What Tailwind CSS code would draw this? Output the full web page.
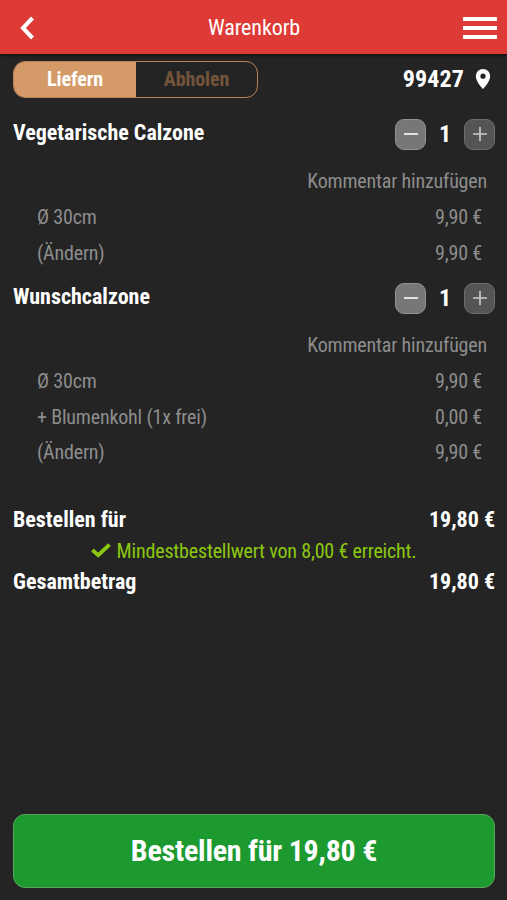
<!DOCTYPE html>
<html lang="de">
<head>
    <meta charset="UTF-8">
    <meta name="viewport" content="width=device-width, initial-scale=1.0">
    <title>Warenkorb</title>
    <script src="https://cdn.jsdelivr.net/npm/@tailwindcss/browser@4"></script>
</head>
<body class="bg-[#242424]">
    <div class="flex flex-col h-[900px] w-[507px] overflow-hidden bg-[#242424] text-white text-[20px] leading-none font-['Roboto_Condensed','Roboto',sans-serif] font-stretch-condensed">
        <!-- Header -->
        <header class="flex items-center h-[54px] shrink-0 bg-[#de3a36] pl-5 pr-[10px] shadow-[0_1px_3px_rgba(0,0,0,0.7)]">
            <svg class="w-[34px] h-6 mt-0.5" viewBox="0 0 34 24" fill="none" stroke="#fff" stroke-width="4"><path d="M12.5 2 L3 12 L12.5 22"/></svg>
            <h1 class="flex-1 text-center pt-0.5 pr-[9px] text-[22px] tracking-[-0.1px]">Warenkorb</h1>
            <svg class="w-[34px] h-6 mt-0.5" viewBox="0 0 34 24" fill="#fff"><path d="M0 1h34v4H0zM0 10h34v4H0zM0 19h34v4H0z"/></svg>
        </header>

        <!-- Delivery / pickup -->
        <div class="flex items-center justify-between h-[50px] shrink-0 pl-[13px] pr-4 pt-px">
            <div class="flex w-[245px] h-[37px] rounded-[12px] border border-[#b88456] overflow-hidden font-bold tracking-[-0.1px]">
                <div class="flex items-center justify-center w-[122px] pb-0.5 bg-[#d49a68]">Liefern</div>
                <div class="flex items-center justify-center flex-1 pb-0.5 text-[#73543b]">Abholen</div>
            </div>
            <div class="flex items-center gap-[11px] -mt-0.5 text-[24px] font-bold">
                <span class="tracking-[0.1px]">99427</span>
                <svg class="w-4 h-5" viewBox="0 0 16 20" fill="#fff" fill-rule="evenodd"><path d="M8 0a7.2 7.2 0 0 0-7.2 7.2C.8 12.500 8 20 8 20s7.200-7.500 7.200-12.800A7.200 7.200 0 0 0 8 0zm0 4.600a2.600 2.600 0 1 1 0 5.200 2.600 2.600 0 0 1 0-5.200z"/></svg>
            </div>
        </div>

        <!-- Items -->
        <section class="mt-0.5 h-[164px] shrink-0 text-[#8d8d8d] tracking-[-0.18px]">
            <div class="flex items-center justify-between h-14 pl-[13px] pr-3 text-white font-bold text-[22px] tracking-normal">
                <h2 class="-mt-0.5">Vegetarische Calzone</h2>
                <div class="flex items-center">
                    <button class="flex items-center justify-center w-[31px] h-[31px] rounded-[9px] border border-[#929292] bg-[#777]"><svg class="w-[14px] h-[14px]" viewBox="0 0 14 14" stroke="#eee" stroke-width="1.800"><path d="M0 7h14"/></svg></button>
                    <span class="w-[38px] text-center text-[24px]">1</span>
                    <button class="flex items-center justify-center w-[31px] h-[31px] rounded-[9px] border border-[#6d6d6d] bg-[#545454]"><svg class="w-[14px] h-[14px]" viewBox="0 0 14 14" stroke="#ccc" stroke-width="1.600"><path d="M0 7h14M7 0v14"/></svg></button>
                </div>
            </div>
            <div class="flex items-center justify-end h-[37px] pr-5">Kommentar hinzufügen</div>
            <div class="flex items-center justify-between h-[35.500px] pl-[37px] pr-[25px] pt-px"><span>Ø 30cm</span><span>9,90 €</span></div>
            <div class="flex items-center justify-between h-[35.500px] pl-[37px] pr-[25px] pt-px"><span>(Ändern)</span><span>9,90 €</span></div>
        </section>

        <section class="h-[200px] shrink-0 text-[#8d8d8d] tracking-[-0.18px]">
            <div class="flex items-center justify-between h-14 pl-[13px] pr-3 text-white font-bold text-[22px] tracking-normal">
                <h2 class="-mt-0.5">Wunschcalzone</h2>
                <div class="flex items-center">
                    <button class="flex items-center justify-center w-[31px] h-[31px] rounded-[9px] border border-[#929292] bg-[#777]"><svg class="w-[14px] h-[14px]" viewBox="0 0 14 14" stroke="#eee" stroke-width="1.800"><path d="M0 7h14"/></svg></button>
                    <span class="w-[38px] text-center text-[24px]">1</span>
                    <button class="flex items-center justify-center w-[31px] h-[31px] rounded-[9px] border border-[#6d6d6d] bg-[#545454]"><svg class="w-[14px] h-[14px]" viewBox="0 0 14 14" stroke="#ccc" stroke-width="1.600"><path d="M0 7h14M7 0v14"/></svg></button>
                </div>
            </div>
            <div class="flex items-center justify-end h-[37px] pr-5">Kommentar hinzufügen</div>
            <div class="flex items-center justify-between h-[35.500px] pl-[37px] pr-[25px]"><span>Ø 30cm</span><span>9,90 €</span></div>
            <div class="flex items-center justify-between h-[35.500px] pl-[37px] pr-[25px] pt-px"><span>+ Blumenkohl (1x frei)</span><span>0,00 €</span></div>
            <div class="flex items-center justify-between h-[35.500px] pl-[37px] pr-[25px]"><span>(Ändern)</span><span>9,90 €</span></div>
        </section>

        <!-- Totals -->
        <div class="mt-[34px] shrink-0">
            <div class="flex items-center justify-between h-[31px] pl-[13px] pr-3 text-[22px] font-bold"><span>Bestellen für</span><span>19,80 €</span></div>
            <div class="flex items-center justify-center gap-[6px] h-[31px] text-[#8cc80f] tracking-[-0.18px]">
                <svg class="w-5 h-[15px]" viewBox="0 0 20 15" fill="none" stroke="#8cc80f" stroke-width="3.800"><path d="M1.400 7 L7.200 12.200 L18.500 1.600"/></svg>
                <span>Mindestbestellwert von 8,00 € erreicht.</span>
            </div>
            <div class="flex items-center justify-between h-[31px] pl-[13px] pr-3 text-[22px] font-bold"><span>Gesamtbetrag</span><span>19,80 €</span></div>
        </div>

        <button class="mt-auto mb-3 ml-[13px] mr-3 h-[74px] shrink-0 rounded-[12px] border border-[#56a75c] bg-[#1c992f] text-[30px] font-bold tracking-[-0.22px]">Bestellen für 19,80 €</button>
    </div>
</body>
</html>
